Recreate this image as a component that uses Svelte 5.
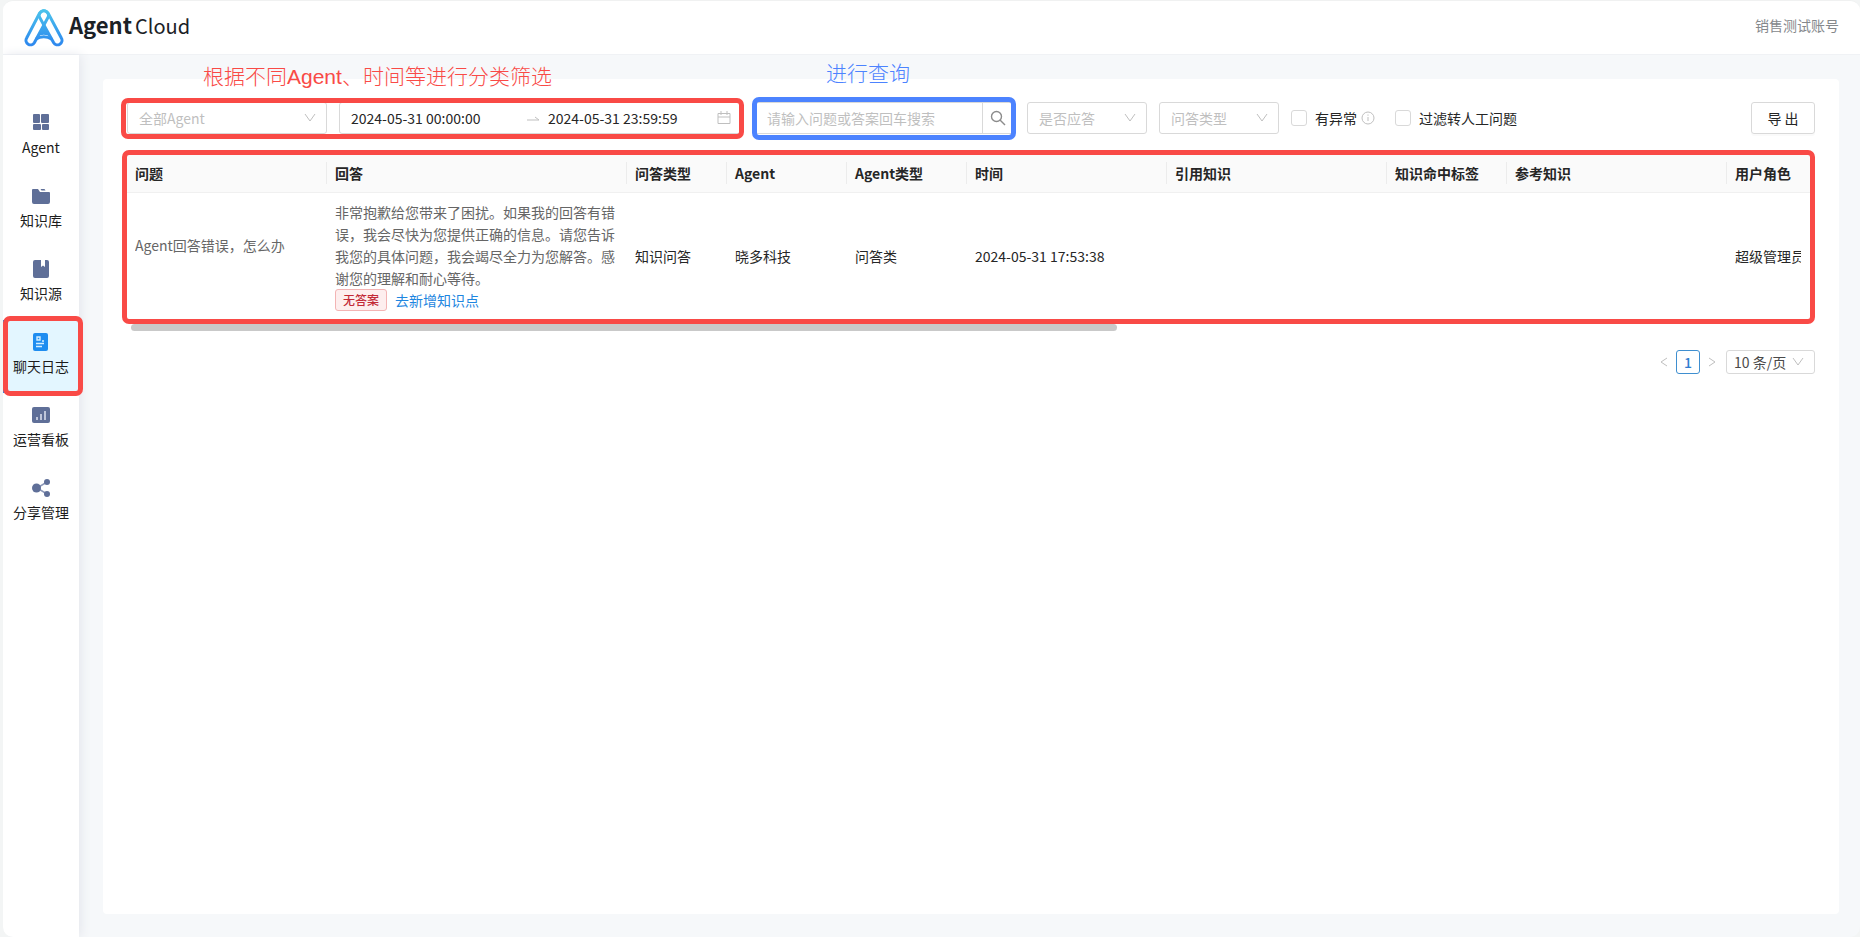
<script>
	const menu = [
		{ name: 'Agent', icon: 'grid' },
		{ name: '知识库', icon: 'folder' },
		{ name: '知识源', icon: 'book' },
		{ name: '聊天日志', icon: 'log' },
		{ name: '运营看板', icon: 'chart' },
		{ name: '分享管理', icon: 'share' }
	];
	let active = '聊天日志';

	const columns = [
		{ title: '问题', width: 200 },
		{ title: '回答', width: 300 },
		{ title: '问答类型', width: 100 },
		{ title: 'Agent', width: 120 },
		{ title: 'Agent类型', width: 120 },
		{ title: '时间', width: 200 },
		{ title: '引用知识', width: 220 },
		{ title: '知识命中标签', width: 120 },
		{ title: '参考知识', width: 220 },
		{ title: '用户角色', width: 120 }
	];

	const rows = [
		{
			question: 'Agent回答错误，怎么办',
			answer: '非常抱歉给您带来了困扰。如果我的回答有错误，我会尽快为您提供正确的信息。请您告诉我您的具体问题，我会竭尽全力为您解答。感谢您的理解和耐心等待。',
			type: '知识问答',
			agent: '晓多科技',
			agentType: '问答类',
			time: '2024-05-31 17:53:38',
			role: '超级管理员'
		}
	];

	let start = '2024-05-31 00:00:00';
	let end = '2024-05-31 23:59:59';
	let keyword = '';
	let abnormal = false;
	let filtered = false;
	let scrollSize = 58.7;
</script>

<div class="app">
	<header>
		<a class="logo" href="#home">
			<svg width="40" height="38" viewBox="72 25 120 114" fill="none">
				<defs>
					<linearGradient id="blue" gradientUnits="userSpaceOnUse" x1="0" y1="28" x2="0" y2="136">
						<stop offset="0" stop-color="#4cc3ec" />
						<stop offset="1" stop-color="#2b86ee" />
					</linearGradient>
				</defs>
				<path d="M131 72L112 107Q131 98 151 107Z" fill="url(#blue)" />
				<g stroke="url(#blue)" stroke-width="9">
					<path d="M119 37L80 112A13 13 0 0 0 103 126L143 52A13 13 0 0 0 119 37Z" />
					<path d="M144 37L184 112A13 13 0 0 1 161 126L120 52A13 13 0 0 1 144 37Z" />
					<path d="M107 116Q131 100 156 116" />
				</g>
			</svg>
			<span class="brand"><b>Agent</b><span>Cloud</span></span>
		</a>
		<span class="account">销售测试账号</span>
	</header>

	<div class="body">
		<nav>
			{#each menu as item}
				<a href="#{item.icon}" class:active={item.name === active}>
					<svg width="20" height="20" viewBox="0 0 20 20" fill="currentColor">
						{#if item.icon === 'grid'}
							<rect x="2" y="1" width="7" height="9" rx="1" />
							<rect x="10" y="1" width="8" height="9" rx="1" />
							<rect x="2" y="11" width="8" height="6" rx="1" />
							<rect x="11" y="11" width="7" height="6" rx="1" />
						{:else if item.icon === 'folder'}
							<path d="M1 4a1 1 0 0 1 1-1h5l2 3h9a1 1 0 0 1 1 1v9a2 2 0 0 1-2 2H3a2 2 0 0 1-2-2z" />
							<path d="M9.500 3h4l1 1.500h-4z" />
						{:else if item.icon === 'book'}
							<path d="M4 1h6v7l2-1.500L14 8V1h2a2 2 0 0 1 2 2v14a2 2 0 0 1-2 2H4a2 2 0 0 1-2-2V3a2 2 0 0 1 2-2z" />
						{:else if item.icon === 'log'}
							<rect x="2" y="1" width="15" height="18" rx="2" />
							<path d="M6 5h3v3H6zM11 9h2M5 11.500h8M5 14.500h6" fill="none" stroke="#d5efff" stroke-width="1.400" />
						{:else if item.icon === 'chart'}
							<rect x="1" y="2" width="18" height="16" rx="2" />
							<path d="M6 12v3M10 9v6M14 6v9" stroke="#dfe4f0" stroke-width="1.500" />
						{:else}
							<path d="M16 4L6 10l10 6" fill="none" stroke="#8c98b8" stroke-width="1.500" />
							<circle cx="5.500" cy="10" r="4.500" />
							<circle cx="16" cy="4" r="3" />
							<circle cx="16" cy="16" r="3" />
						{/if}
					</svg>
					{item.name}
					{#if item.name === active}
						<i class="mark mark-menu"></i>
					{/if}
				</a>
			{/each}
		</nav>

		<main>
			<section class="card">
				<div class="filters">
					<div class="group">
						<div class="select agent">
							<select aria-label="Agent"><option>全部Agent</option></select>
							<svg width="12" height="12" viewBox="0 0 12 12"><path d="M1 2l5 7 5-7" /></svg>
						</div>
						<div class="range">
							<input aria-label="开始时间" bind:value={start} />
							<svg width="14" height="12" viewBox="0 0 14 12"><path d="M1 8h12L9 5" /></svg>
							<input aria-label="结束时间" bind:value={end} />
							<svg width="14" height="14" viewBox="0 0 14 14"><path d="M1 2.500h12v10H1zM1 6h12M4 0v4M10 0v4" /></svg>
						</div>
						<i class="mark mark-filter"></i>
						<span class="note note-filter">根据不同Agent、时间等进行分类筛选</span>
					</div>

					<div class="search">
						<input aria-label="搜索" placeholder="请输入问题或答案回车搜索" bind:value={keyword} />
						<button aria-label="查询">
							<svg width="16" height="16" viewBox="0 0 16 16"><circle cx="6.500" cy="6.500" r="5" /><path d="M10 10l5 5" /></svg>
						</button>
						<i class="mark mark-search"></i>
						<span class="note note-search">进行查询</span>
					</div>

					<div class="select">
						<select aria-label="是否应答"><option>是否应答</option></select>
						<svg width="12" height="12" viewBox="0 0 12 12"><path d="M1 2l5 7 5-7" /></svg>
					</div>
					<div class="select">
						<select aria-label="问答类型"><option>问答类型</option></select>
						<svg width="12" height="12" viewBox="0 0 12 12"><path d="M1 2l5 7 5-7" /></svg>
					</div>

					<label>
						<input type="checkbox" bind:checked={abnormal} />
						有异常
						<svg class="info" width="14" height="14" viewBox="0 0 14 14"><circle cx="7" cy="7" r="6" /><path d="M7 6v4M7 3.500v1.200" /></svg>
					</label>
					<label class="manual">
						<input type="checkbox" bind:checked={filtered} />
						过滤转人工问题
					</label>

					<button class="export">导 出</button>
				</div>

				<div class="table-box">
					<div class="table-scroll">
						<table>
							<colgroup>
								{#each columns as col}
									<col style="width: {col.width}px" />
								{/each}
								<col />
							</colgroup>
							<thead>
								<tr>
									{#each columns as col}
										<th>{col.title}</th>
									{/each}
									<th></th>
								</tr>
							</thead>
							<tbody>
								{#each rows as row}
									<tr>
										<td><div class="question">{row.question}</div></td>
										<td>
											<div class="answer">{row.answer}</div>
											<div class="ops">
												<span class="tag">无答案</span>
												<a href="#add">去新增知识点</a>
											</div>
										</td>
										<td>{row.type}</td>
										<td>{row.agent}</td>
										<td>{row.agentType}</td>
										<td>{row.time}</td>
										<td></td>
										<td></td>
										<td></td>
										<td><div class="role">{row.role}</div></td>
										<td></td>
									</tr>
								{/each}
							</tbody>
						</table>
					</div>
					<div class="track"><div class="thumb" style="width: {scrollSize}%"></div></div>
					<i class="mark mark-table"></i>
				</div>

				<div class="pager">
					<button aria-label="上一页"><svg width="10" height="12" viewBox="0 0 10 12"><path d="M8 2L2 6l6 4" /></svg></button>
					<button class="current">1</button>
					<button aria-label="下一页"><svg width="10" height="12" viewBox="0 0 10 12"><path d="M2 2l6 4-6 4" /></svg></button>
					<div class="select size">
						<select aria-label="每页条数"><option>10 条/页</option></select>
						<svg width="12" height="12" viewBox="0 0 12 12"><path d="M1 2l5 7 5-7" /></svg>
					</div>
				</div>
			</section>
		</main>
	</div>
</div>

<style>
	:global(body) {
		background: #f3f5f5;
	}

	.app {
		box-sizing: border-box;
		min-height: 100vh;
		margin-left: 3px;
		border-top: 1px solid #f0f1f1;
		border-radius: 10px;
		overflow: hidden;
		display: flex;
		flex-direction: column;
		background: #f6f8fa;
		color: #262626;
		font: 14px/22px "Noto Sans CJK SC", sans-serif;
	}

	input, select, button {
		box-sizing: border-box;
		margin: 0;
		font: inherit;
		color: inherit;
		background: none;
		border: none;
		outline: none;
	}

	a {
		text-decoration: none;
		color: inherit;
	}

	svg {
		flex: none;
	}

	header {
		height: 53px;
		padding: 0 21px;
		display: flex;
		align-items: center;
		justify-content: space-between;
		background: #fff;
		border-bottom: 1px solid #f0f2f5;
	}

	.logo {
		display: flex;
		align-items: center;
		gap: 5px;
		color: #1b2126;
	}

	.brand {
		display: flex;
		align-items: baseline;
		gap: 3px;
		padding-bottom: 6px;
		font-size: 20px;
	}

	.brand b {
		font-size: 22px;
	}

	.account {
		padding-bottom: 6px;
		color: #85888c;
	}

	.body {
		flex: 1;
		display: flex;
	}

	nav {
		flex: none;
		width: 76px;
		padding-top: 46px;
		background: #fff;
		box-shadow: 2px 0 10px #e4e6ec;
	}

	nav a {
		position: relative;
		box-sizing: border-box;
		height: 73px;
		padding-top: 12px;
		display: flex;
		flex-direction: column;
		align-items: center;
		gap: 3px;
		color: #1c1c1c;
	}

	nav svg {
		color: #5f6f98;
	}

	nav .active {
		background: #e3f6ff;
		box-shadow: inset 4px 0 #1e8df0;
	}

	nav .active svg {
		color: #1e8df0;
	}

	main {
		flex: 1;
		min-width: 0;
		padding: 24px 21px 23px 24px;
		display: flex;
	}

	.card {
		flex: 1;
		min-width: 0;
		box-sizing: border-box;
		padding: 23px 24px;
		background: #fff;
		border-radius: 4px;
	}

	.filters {
		display: flex;
		align-items: center;
		gap: 12px;
	}

	.group {
		position: relative;
		display: flex;
		gap: 12px;
	}

	.select {
		position: relative;
		width: 120px;
		color: #bfbfbf;
	}

	.select select {
		width: 100%;
		height: 32px;
		padding: 0 30px 0 11px;
		appearance: none;
		border: 1px solid #d9d9d9;
		border-radius: 3px;
	}

	.select svg {
		position: absolute;
		right: 11px;
		top: 10px;
		pointer-events: none;
	}

	.select svg, .range svg, .search svg, .pager svg, .info {
		fill: none;
		stroke: #bfbfbf;
	}

	.agent {
		width: 200px;
	}

	.range {
		box-sizing: border-box;
		width: 404px;
		height: 32px;
		padding: 0 11px;
		display: flex;
		align-items: center;
		border: 1px solid #d9d9d9;
		border-radius: 3px;
	}

	.range input {
		flex: 1;
		min-width: 0;
		padding: 0;
	}

	.range input:first-child {
		flex: none;
		width: 175px;
	}

	.range input + svg {
		margin-right: 8px;
	}

	.range svg:last-child {
		margin-right: 0;
	}

	.search {
		position: relative;
		box-sizing: border-box;
		width: 260px;
		height: 32px;
		display: flex;
		border: 1px solid #d9d9d9;
		border-radius: 3px;
	}

	.search input {
		flex: 1;
		min-width: 0;
		padding: 0 11px;
	}

	.search input::placeholder {
		color: #bfbfbf;
	}

	.search button {
		width: 32px;
		padding: 0 2px 0 0;
		border-left: 1px solid #d9d9d9;
		line-height: 0;
	}

	.search svg {
		stroke: #8c8c8c;
		stroke-width: 1.400;
	}

	label {
		display: flex;
		align-items: center;
		gap: 8px;
	}

	label input {
		appearance: none;
		width: 16px;
		height: 16px;
		border: 1px solid #d9d9d9;
		border-radius: 3px;
	}

	label input:checked {
		background: #1e8df0;
	}

	.info {
		margin-left: -4px;
	}

	.manual {
		margin-left: 8px;
	}

	.export {
		width: 64px;
		height: 32px;
		margin-left: auto;
		padding: 0;
		border: 1px solid #d9d9d9;
		border-radius: 3px;
		box-shadow: 0 2px 0 #fafafa;
	}

	.table-box {
		position: relative;
		margin-top: 20px;
	}

	.table-scroll {
		overflow: hidden;
		padding-bottom: 5px;
	}

	table {
		table-layout: fixed;
		width: 2880px;
		border-collapse: separate;
		border-spacing: 0;
	}

	th {
		position: relative;
		height: 22px;
		padding: 8px;
		text-align: left;
		font-weight: 600;
		background: #fafafa;
		border-bottom: 1px solid #f0f0f0;
		white-space: nowrap;
	}

	th:not(:last-child)::after {
		content: "";
		position: absolute;
		right: 0;
		top: 8px;
		width: 1px;
		height: 22px;
		background: #ececec;
	}

	td {
		padding: 8px;
		vertical-align: middle;
	}

	.question {
		width: 150px;
		height: 44px;
		overflow: hidden;
		white-space: nowrap;
		color: #666;
	}

	.answer {
		color: #666;
	}

	.ops {
		display: flex;
		align-items: center;
		gap: 8px;
		height: 22px;
		color: #1e86e0;
	}

	.tag {
		padding: 0 7px;
		font-size: 12px;
		line-height: 20px;
		font-weight: 500;
		color: #c32a37;
		background: #fdeeee;
		border: 1px solid #f3b4b4;
		border-radius: 3px;
	}

	.role {
		width: 66px;
		overflow: hidden;
		white-space: nowrap;
	}

	.track {
		height: 11px;
		padding: 0 4px;
	}

	.thumb {
		height: 7px;
		border-radius: 4px;
		background: #c9c9c9;
	}

	.pager {
		margin-top: 15px;
		display: flex;
		justify-content: flex-end;
		align-items: center;
	}

	.pager button {
		width: 24px;
		height: 24px;
		padding: 0;
	}

	.pager .current {
		border: 1px solid #3f8fd0;
		border-radius: 3px;
		color: #2f7cd0;
		font-weight: 500;
	}

	.size {
		width: 89px;
		margin-left: 2px;
		color: #4a4a4a;
	}

	.size select {
		height: 24px;
		padding: 0 0 0 7px;
	}

	.size svg {
		top: 6px;
	}

	/* highlight frames and their captions */
	.mark {
		position: absolute;
		border: 5px solid #f94a46;
		border-radius: 7px;
		pointer-events: none;
	}

	.mark-menu {
		inset: -4px -4px -3px 0;
	}

	.mark-filter {
		inset: -4px -1px -5px -6px;
	}

	.mark-search {
		inset: -6px -2px -7px -4px;
		border-color: #4c83ff;
	}

	.mark-table {
		inset: -4px 0 11px -5px;
	}

	.note {
		position: absolute;
		font: 300 21px/28px "Liberation Sans", "Noto Sans CJK SC", sans-serif;
		white-space: nowrap;
		color: #f94a46;
	}

	.note-filter {
		left: 76px;
		bottom: 43px;
	}

	.note-search {
		left: 70px;
		bottom: 45px;
		color: #4c83ff;
	}
</style>
